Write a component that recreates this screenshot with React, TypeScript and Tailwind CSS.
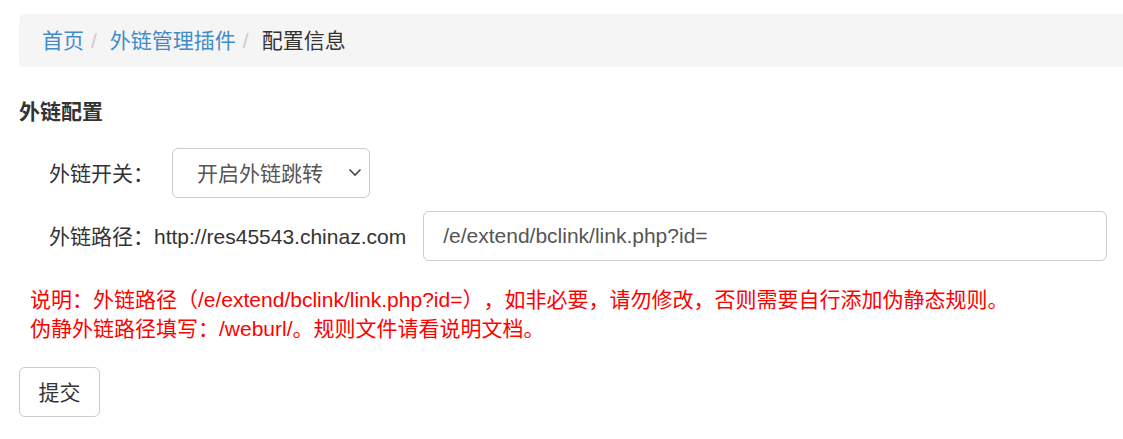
import React from 'react';

const font = { fontFamily: '"Liberation Sans", "Noto Sans CJK SC", sans-serif' };

const Crumb = ({ children, last }: { children: React.ReactNode; last?: boolean }) => (
  <li className="inline-flex items-center">
    {last ? (
      <span className="text-[#333]">{children}</span>
    ) : (
      <>
        <a href="#" className="text-[#428bca]">{children}</a>
        <span className="pl-[7px] pr-[13px] text-[#ccc]">/</span>
      </>
    )}
  </li>
);

export default function App() {
  return (
    <div
      className="bg-white min-h-[439px] pl-[19px] pt-[14px] text-[21px] leading-[29px] text-[#333] [text-spacing-trim:space-all]"
      style={font}
    >
      {/* breadcrumb runs off the right edge */}
      <ol className="flex items-center h-[53px] px-[23px] bg-[#f5f5f5] rounded-l-[6px] mr-[-20px]">
        <Crumb>首页</Crumb>
        <Crumb>外链管理插件</Crumb>
        <Crumb last>配置信息</Crumb>
      </ol>

      <form className="pt-[30px]" onSubmit={(e) => e.preventDefault()}>
        <h4 className="font-bold text-[#333]">外链配置</h4>

        <div className="flex flex-col gap-[13px] mt-[22px] pl-[30px]">
          <div className="flex items-center gap-[18px]">
            <label>外链开关：</label>
            <div className="relative">
              <select className="appearance-none w-[198px] h-[50px] pl-[24px] pr-[40px] border border-[#ccc] rounded-[6px] bg-white text-[#555] outline-none">
                <option>开启外链跳转</option>
                <option>关闭外链跳转</option>
              </select>
              <svg
                className="absolute right-[8px] top-[20px] pointer-events-none"
                width="14"
                height="9"
                viewBox="0 0 14 9"
                fill="none"
                stroke="#444"
                strokeWidth="1.6"
              >
                <path d="M1.5 1.5 L7 7 L12.5 1.5" />
              </svg>
            </div>
          </div>

          <div className="flex items-center gap-[17px]">
            <label>外链路径：http://res45543.chinaz.com</label>
            <input
              defaultValue="/e/extend/bclink/link.php?id="
              className="w-[684px] h-[50px] px-[19px] border border-[#ccc] rounded-[6px] text-[#555] outline-none"
            />
          </div>
        </div>

        <div className="mt-[24px] pl-[11px] text-[#f00]">
          <p>说明：外链路径（/e/extend/bclink/link.php?id=），如非必要，请勿修改，否则需要自行添加伪静态规则。</p>
          <p>伪静外链路径填写：/weburl/。规则文件请看说明文档。</p>
        </div>

        <button
          type="submit"
          className="mt-[24px] w-[81px] h-[50px] border border-[#ccc] rounded-[6px] bg-white text-[#333]"
        >
          提交
        </button>
      </form>
    </div>
  );
}
